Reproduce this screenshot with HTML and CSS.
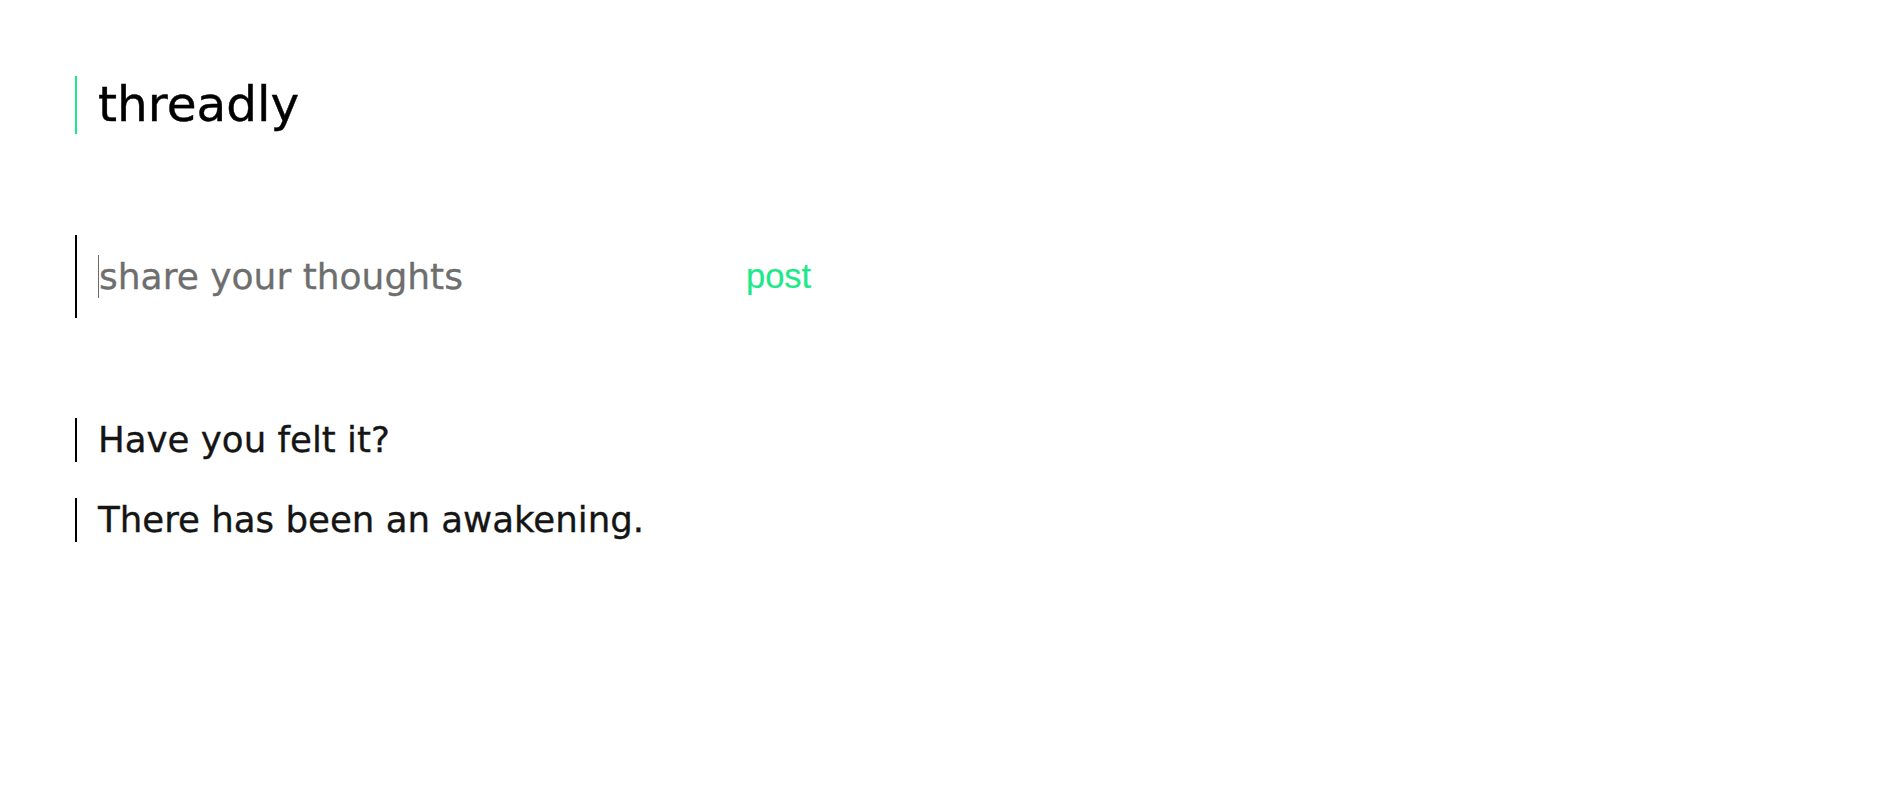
FILE: index.html
```html
<!DOCTYPE html>
<html lang="en">
<head>
<meta charset="utf-8">
<title>threadly</title>
<link rel="stylesheet" href="styles.css">
</head>
<body>
<main class="app">
  <header class="brand">
    <h1 class="brand-title">threadly</h1>
  </header>

  <form class="composer" onsubmit="return false">
    <label class="composer-field">
      <span class="caret"></span>
      <input class="composer-input" type="text" placeholder="share your thoughts">
    </label>
    <button class="composer-post" type="submit">post</button>
  </form>

  <section class="feed">
    <p class="post">Have you felt it?</p>
    <p class="post">There has been an awakening.</p>
  </section>
</main>
</body>
</html>
```

FILE: styles.css
```css
html, body {
  margin: 0;
  padding: 0;
  background: #ffffff;
}

.app {
  padding: 76px 0 0 75px;
  font-family: "DejaVu Sans", "Liberation Sans", sans-serif;
  color: #111111;
}

.brand {
  border-left: 2px solid #1de98b;
  height: 58px;
  padding-left: 21px;
  display: flex;
  align-items: center;
}

.brand-title {
  margin: 0;
  font-weight: 400;
  font-size: 48.5px;
  line-height: 58px;
  color: #000000;
  padding-bottom: 3px;
  -webkit-text-stroke: 0.4px #000000;
}

.composer {
  margin-top: 101px;
  border-left: 2px solid #000000;
  height: 83px;
  box-sizing: border-box;
  padding: 0 0 0 21px;
  display: flex;
  align-items: center;
}

.composer-field {
  position: relative;
  display: block;
}

.caret {
  position: absolute;
  left: 0;
  top: 0;
  width: 1px;
  height: 43px;
  background: #6a6a6a;
}

.composer-input {
  display: block;
  width: 628px;
  height: 43px;
  margin: 0;
  padding: 0 0 0 1px;
  border: 0;
  outline: none;
  background: transparent;
  font-family: "DejaVu Sans", sans-serif;
  font-size: 36px;
  color: #333333;
  -webkit-text-stroke: 0.3px #707070;
}

.composer-input::placeholder {
  color: #6e6e6e;
  opacity: 1;
}

.composer-post {
  margin: 0;
  padding: 0 19px;
  border: 0;
  background: transparent;
  font-family: "Liberation Sans", Arial, sans-serif;
  font-size: 34.5px;
  color: #1de98b;
  -webkit-text-stroke: 0.2px #1de98b;
  cursor: pointer;
}

.feed {
  margin-top: 100px;
  display: flex;
  flex-direction: column;
  gap: 36px;
}

.post {
  margin: 0;
  border-left: 2px solid #000000;
  height: 44px;
  padding-left: 21px;
  font-size: 35.6px;
  line-height: 44px;
  color: #151515;
  -webkit-text-stroke: 0.35px #151515;
}
```
